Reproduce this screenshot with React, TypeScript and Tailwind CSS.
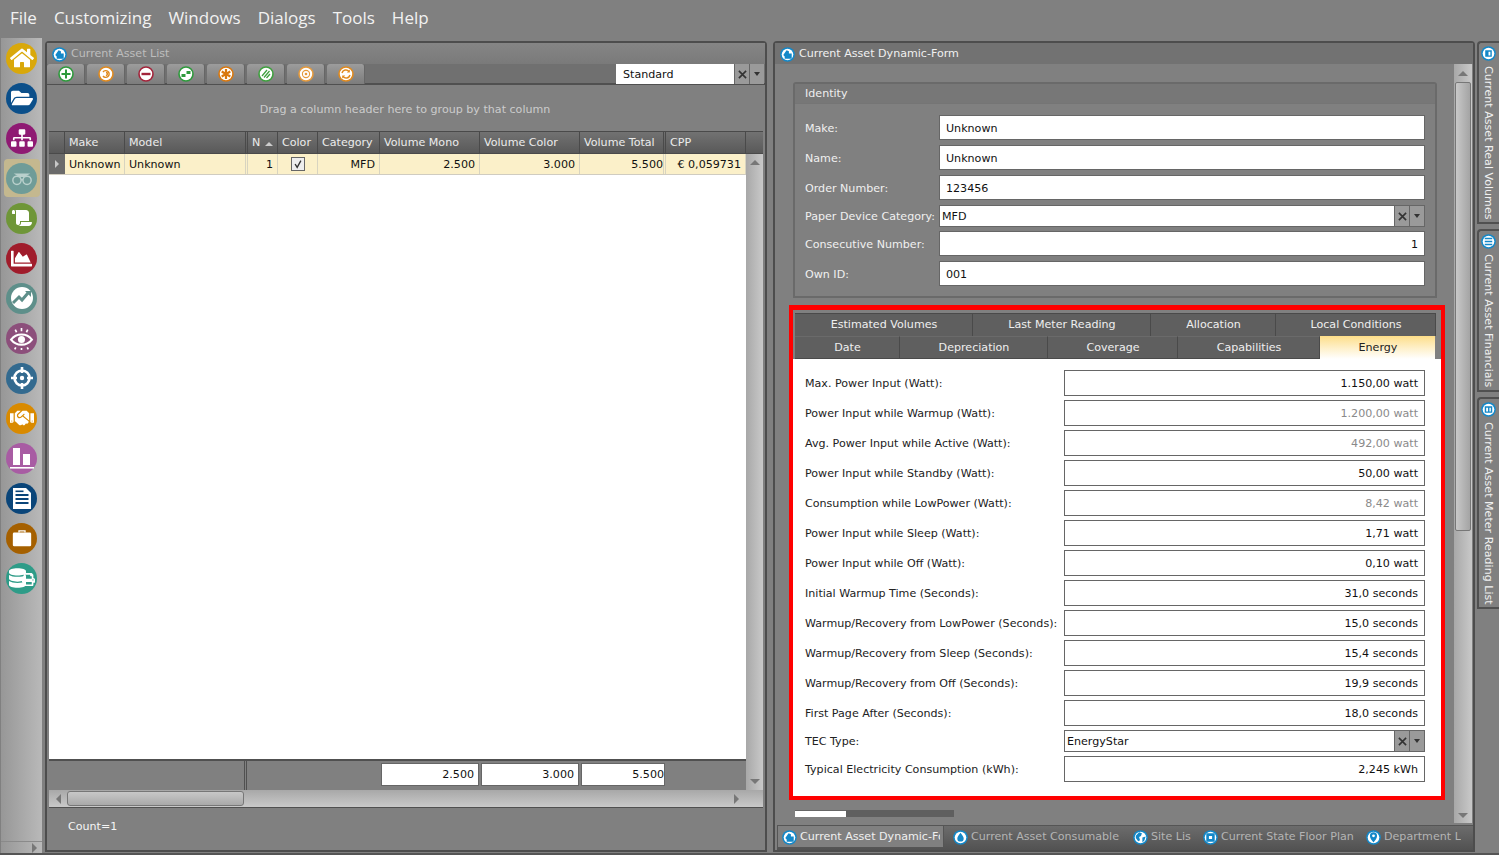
import React from 'react';
import {
  FaHome, FaFolderOpen, FaSitemap, FaScroll, FaChartArea, FaHandshake, FaDatabase, FaPrint,
} from 'react-icons/fa';

const menu = ['File', 'Customizing', 'Windows', 'Dialogs', 'Tools', 'Help'];

const Binoculars = () => (
  <svg viewBox="0 0 24 24" className="w-[22px] h-[22px]" fill="none" stroke="#b9d0cc" strokeWidth="1.6">
    <circle cx="6.5" cy="14.5" r="4.5" />
    <circle cx="17.5" cy="14.5" r="4.5" />
    <path d="M3 7h18l-6 4h-6z" fill="#b9d0cc" stroke="none" />
    <path d="M11 14h2" />
  </svg>
);
const Trend = () => (
  <svg viewBox="0 0 24 24" className="w-[24px] h-[24px]">
    <circle cx="12" cy="12" r="11" fill="#fff" />
    <path d="M3 17l6-6 3 3 6-7" fill="none" stroke="#5e8f8a" strokeWidth="3" />
    <path d="M15 5h6v6z" fill="#5e8f8a" />
  </svg>
);
const Target = () => (
  <svg viewBox="0 0 24 24" className="w-[24px] h-[24px]" fill="none" stroke="#fff">
    <circle cx="12" cy="12" r="7.5" strokeWidth="2.6" />
    <circle cx="12" cy="12" r="2.2" fill="#fff" strokeWidth="0" />
    <path d="M12 1v6M12 17v6M1 12h6M17 12h6" strokeWidth="2.6" />
  </svg>
);
const Eye = () => (
  <svg viewBox="0 0 24 24" className="w-[25px] h-[25px]" fill="none" stroke="#fff">
    <path d="M2 13c5-6.500 15-6.500 20 0-5 6.500-15 6.500-20 0z" strokeWidth="2" />
    <circle cx="12" cy="13" r="3.400" fill="#fff" strokeWidth="0" />
    <path d="M12 2v3M6 3.500l1.300 2.500M18 3.500l-1.300 2.500M12 21v2M6.500 20.500l-1 2M17.500 20.500l1 2" strokeWidth="1.600" />
  </svg>
);
const Bars = () => (
  <svg viewBox="0 0 24 24" className="w-[24px] h-[24px]" fill="#fff">
    <rect x="3" y="2" width="7" height="17" />
    <rect x="13" y="8" width="7" height="11" />
    <rect x="0" y="21" width="24" height="1.6" />
  </svg>
);
const TableDoc = () => (
  <svg viewBox="0 0 24 24" className="w-[24px] h-[24px]" fill="#fff">
    <path d="M3 2h13l5 5v16H3z" />
    <g fill="#0a4579">
      <rect x="5.5" y="8" width="13" height="2" />
      <rect x="5.5" y="12" width="13" height="2" />
      <rect x="5.5" y="16" width="13" height="2" />
      <rect x="5.5" y="4.5" width="8" height="1.6" />
    </g>
  </svg>
);
const Case = () => (
  <svg viewBox="0 0 24 24" className="w-[22px] h-[22px]" fill="#fff">
    <path d="M8 6V3.500h8V6h-1.400V5H9.400v1z" />
    <rect x="2" y="6" width="20" height="15" rx="1.500" />
  </svg>
);
const DbPrint = () => (
  <span className="relative block w-[26px] h-[22px]">
    <FaDatabase className="absolute left-0 top-[1px] text-white w-[17px] h-[20px]" />
    <FaPrint className="absolute right-0 top-[6px] text-white w-[13px] h-[13px]" />
  </span>
);

const sideIcons: { bg: string; icon: React.ReactNode; active?: boolean }[] = [
  { bg: 'bg-[#d9a80b]', icon: <FaHome className="text-white w-[24px] h-[24px]" /> },
  { bg: 'bg-[#0b4f8a]', icon: <FaFolderOpen className="text-white w-[22px] h-[22px]" /> },
  { bg: 'bg-[#8f1a73]', icon: <FaSitemap className="text-white w-[22px] h-[22px]" /> },
  { bg: 'bg-[#6f9c98]', icon: <Binoculars />, active: true },
  { bg: 'bg-[#6f9638]', icon: <FaScroll className="text-white w-[20px] h-[20px]" /> },
  { bg: 'bg-[#a01c2b]', icon: <FaChartArea className="text-white w-[21px] h-[21px]" /> },
  { bg: 'bg-[#5e8f8a]', icon: <Trend /> },
  { bg: 'bg-[#8c4f7b]', icon: <Eye /> },
  { bg: 'bg-[#336a8f]', icon: <Target /> },
  { bg: 'bg-[#d98a00]', icon: <FaHandshake className="text-white w-[24px] h-[24px]" /> },
  { bg: 'bg-[#a85ca3]', icon: <Bars /> },
  { bg: 'bg-[#0a4579]', icon: <TableDoc /> },
  { bg: 'bg-[#a56000]', icon: <Case /> },
  { bg: 'bg-[#2e9c88]', icon: <DbPrint /> },
];

// small toolbar glyphs, all share a white disc with a coloured ring
const ToolIcon = ({ color, children }: { color: string; children: React.ReactNode }) => (
  <svg viewBox="0 0 16 16" className="w-[16px] h-[16px]">
    <circle cx="8" cy="8" r="7" fill="#fff" stroke={color} strokeWidth="1.6" />
    <g stroke={color} fill={color}>{children}</g>
  </svg>
);

const toolbar: React.ReactNode[] = [
  <ToolIcon color="#2e9a3c"><path d="M8 3.5v9M3.5 8h9" strokeWidth="2" fill="none" /></ToolIcon>,
  <ToolIcon color="#e08a1e"><path d="M5 6a3.4 3.4 0 1 1 0 4M8 6.5a1.5 1.5 0 1 1-.1 3" strokeWidth="1.4" fill="none" /></ToolIcon>,
  <ToolIcon color="#a3243b"><path d="M3.5 8h9" strokeWidth="2.4" fill="none" /></ToolIcon>,
  <ToolIcon color="#2e9a3c"><path d="M3.5 8h4v3h-4zM8.5 5h4v3h-4z" strokeWidth="0" /></ToolIcon>,
  <ToolIcon color="#d9780f"><path d="M8 3v10M3.7 5.5l8.6 5M12.3 5.5l-8.6 5" strokeWidth="2.2" fill="none" /></ToolIcon>,
  <ToolIcon color="#3fa03f"><path d="M4 10l5-6M6 11.5l5.5-6.5M8.5 12l3.5-4" strokeWidth="1.3" fill="none" /></ToolIcon>,
  <ToolIcon color="#e59a3c"><circle cx="8" cy="8" r="3.6" fill="none" strokeWidth="1.1" /><circle cx="8" cy="8" r="1.3" strokeWidth="0" /></ToolIcon>,
  <ToolIcon color="#e08a1e"><path d="M4 7a4 4 0 0 1 7-1.5M12 9a4 4 0 0 1-7 1.5" strokeWidth="1.5" fill="none" /><path d="M11.8 3.5v3h-3zM4.2 12.5v-3h3z" strokeWidth="0" /></ToolIcon>,
];

const columns = [
  { label: 'Make', value: 'Unknown', w: 'w-[60px]', right: false },
  { label: 'Model', value: 'Unknown', w: 'w-[123px]', right: false, sep: true },
  { label: 'N', value: '1', w: 'w-[30px]', right: true, sort: true },
  { label: 'Color', value: '', w: 'w-[40px]', right: false, check: true },
  { label: 'Category', value: 'MFD', w: 'w-[62px]', right: true },
  { label: 'Volume Mono', value: '2.500', w: 'w-[100px]', right: true },
  { label: 'Volume Color', value: '3.000', w: 'w-[100px]', right: true },
  { label: 'Volume Total', value: '5.500', w: 'w-[86px]', right: true, clip: true, sep: true },
  { label: 'CPP', value: '€ 0,059731', w: 'w-[80px]', right: true },
];

const X = ({ size = 'w-[9px] h-[9px]' }: { size?: string }) => (
  <svg viewBox="0 0 10 10" className={size}><path d="M1 1l8 8M9 1l-8 8" stroke="#333" strokeWidth="1.8" /></svg>
);
const Caret = () => <span className="block w-0 h-0 border-x-[3.5px] border-x-transparent border-t-[4px] border-t-[#333]" />;

const ComboButtons = () => (
  <>
    <span className="w-[15px] self-stretch bg-[#9a9a9a] border-l border-[#666] flex items-center justify-center"><X /></span>
    <span className="w-[15px] self-stretch bg-[#9a9a9a] border-l border-[#666] flex items-center justify-center"><Caret /></span>
  </>
);

// round blue badge used on window titles and dock tabs
const Badge = ({ kind = 'asset' }: { kind?: 'asset' | 'drop' | 'globe' | 'dot' | 'pin' | 'vol' | 'fin' | 'meter' }) => (
  <svg viewBox="0 0 16 16" className="w-[15px] h-[15px] shrink-0">
    <circle cx="8" cy="8" r="7.8" fill="#1388c9" />
    <circle cx="8" cy="8" r="6.2" fill="#fff" />
    {kind === 'asset' && <path d="M3.500 8.500l3.500-5 2.500 1v2.500h3v5.500h-7.500v-2.500z" fill="#1388c9" />}
    {kind === 'drop' && <path d="M8 3c2 2.700 3.400 4.400 3.400 6a3.400 3.400 0 0 1-6.800 0c0-1.600 1.400-3.300 3.400-6z" fill="#1388c9" />}
    {kind === 'globe' && <path d="M3 6l3.500-3.500 3 1-1 3-2 1 1 3.500-2 1-2.500-3.500zM10 8l3.500-1-1.500 4.500-2 1.500z" fill="#1388c9" />}
    {kind === 'dot' && <path d="M3.500 3.500h9v9h-9zM6.300 6.300v3.400h3.400v-3.400z" fill="#1388c9" fillRule="evenodd" />}
    {kind === 'pin' && <path d="M8 2.500a3.800 3.800 0 0 1 3.800 3.800c0 2.300-2.300 5-3.800 7-1.500-2-3.800-4.700-3.800-7A3.800 3.800 0 0 1 8 2.500zm0 2.200a1.500 1.500 0 1 0 0 3 1.500 1.500 0 0 0 0-3z" fill="#1388c9" fillRule="evenodd" />}
    {kind === 'vol' && <path d="M4.500 4.500h7v7h-7zM8 6v4h2v-4z" fill="#1388c9" fillRule="evenodd" />}
    {kind === 'fin' && <path d="M4 4h8v1.500h-8zM4 7.200h8v1.500h-8zM4 10.500h8v1.500h-8z" fill="#1388c9" />}
    {kind === 'meter' && <path d="M4 4.500h8v7h-8zM5.500 6v4h2v-4zM9 6v4h1.500v-4z" fill="#1388c9" fillRule="evenodd" />}
  </svg>
);

const ScrollArrow = ({ dir }: { dir: 'up' | 'down' | 'left' | 'right' }) => {
  if (dir === 'up') return <span className="block w-0 h-0 border-x-[5px] border-x-transparent border-b-[5px] border-b-[#777]" />;
  if (dir === 'down') return <span className="block w-0 h-0 border-x-[5px] border-x-transparent border-t-[5px] border-t-[#777]" />;
  if (dir === 'left') return <span className="block w-0 h-0 border-y-[5px] border-y-transparent border-r-[5px] border-r-[#777]" />;
  return <span className="block w-0 h-0 border-y-[5px] border-y-transparent border-l-[5px] border-l-[#777]" />;
};

const identityRows = [
  { label: 'Make:', value: 'Unknown', cls: '' },
  { label: 'Name:', value: 'Unknown', cls: 'mt-[5px]' },
  { label: 'Order Number:', value: '123456', cls: 'mt-[5px]' },
  { label: 'Paper Device Category:', value: 'MFD', cls: 'mt-[5px]', combo: true },
  { label: 'Consecutive Number:', value: '1', cls: 'mt-[4px]', right: true },
  { label: 'Own ID:', value: '001', cls: 'mt-[5px]' },
];

const energyRows = [
  { label: 'Max. Power Input (Watt):', value: '1.150,00 watt' },
  { label: 'Power Input while Warmup (Watt):', value: '1.200,00 watt', muted: true },
  { label: 'Avg. Power Input while Active (Watt):', value: '492,00 watt', muted: true },
  { label: 'Power Input while Standby (Watt):', value: '50,00 watt' },
  { label: 'Consumption while LowPower (Watt):', value: '8,42 watt', muted: true },
  { label: 'Power Input while Sleep (Watt):', value: '1,71 watt' },
  { label: 'Power Input while Off (Watt):', value: '0,10 watt' },
  { label: 'Initial Warmup Time (Seconds):', value: '31,0 seconds' },
  { label: 'Warmup/Recovery from LowPower (Seconds):', value: '15,0 seconds' },
  { label: 'Warmup/Recovery from Sleep (Seconds):', value: '15,4 seconds' },
  { label: 'Warmup/Recovery from Off (Seconds):', value: '19,9 seconds' },
  { label: 'First Page After (Seconds):', value: '18,0 seconds' },
];

const tabsTop = [
  { label: 'Estimated Volumes', w: 'w-[178px]' },
  { label: 'Last Meter Reading', w: 'w-[178px]' },
  { label: 'Allocation', w: 'w-[125px]' },
  { label: 'Local Conditions', w: 'w-[160px]' },
];
const tabsBottom = [
  { label: 'Date', w: 'w-[105px]' },
  { label: 'Depreciation', w: 'w-[148px]' },
  { label: 'Coverage', w: 'w-[130px]' },
  { label: 'Capabilities', w: 'w-[142px]' },
];

const dockTabs = [
  { label: 'Current Asset Consumable', kind: 'drop' as const, w: 'w-[180px]' },
  { label: 'Site Lis', kind: 'globe' as const, w: 'w-[70px]' },
  { label: 'Current State Floor Plan', kind: 'dot' as const, w: 'w-[163px]' },
  { label: 'Department Li', kind: 'pin' as const, w: 'w-[104px]' },
];

const sideTabs = [
  { label: 'Current Asset Real Volumes', kind: 'vol' as const, h: 'h-[183px]' },
  { label: 'Current Asset Financials', kind: 'fin' as const, h: 'h-[163px]' },
  { label: 'Current Asset Meter Reading List', kind: 'meter' as const, h: 'h-[212px]' },
];

export default function App() {
  return (
    <div className="w-[1499px] h-[855px] overflow-hidden bg-[#808080] flex flex-col font-['DejaVu_Sans',sans-serif] text-[11.1px] border-b-2 border-[#555]">
      {/* Menu */}
      <div className="h-[38px] shrink-0 flex items-center pl-[10px] pb-[2px] gap-[17px] font-['Open_Sans',sans-serif] text-[17px] text-[#f2f2f2]">
        {menu.map(m => <span key={m}>{m}</span>)}
      </div>

      <div className="flex-1 flex min-h-0">
        {/* Icon rail */}
        <div className="w-[41px] ml-px mr-[3px] shrink-0 flex flex-col bg-gradient-to-r from-[#979797] to-[#b9b9b9]">
          <div className="flex-1 flex flex-col items-center pt-[1px]">
            {sideIcons.map((s, i) => (
              <div key={i} className={`w-[36px] h-[38px] mb-[2px] flex items-center justify-center rounded-sm ${s.active ? 'bg-[#c4b88f]' : ''}`}>
                <span className={`w-[31px] h-[31px] rounded-full flex items-center justify-center ${s.bg}`}>{s.icon}</span>
              </div>
            ))}
          </div>
          <div className="h-[12px] border-t border-[#8a8a8a] flex items-center justify-end pr-[5px]"><ScrollArrow dir="right" /></div>
        </div>

        {/* Current Asset List */}
        <div className="w-[722px] h-[811px] mt-[3px] shrink-0 border-2 border-[#4d4d4d] rounded-t-sm flex flex-col">
          <div className="h-[21px] shrink-0 flex items-center gap-[4px] pl-[5px] pt-[1px] text-[#bdbdbd] bg-gradient-to-b from-[#858585] to-[#7a7a7a]">
            <Badge />
            <span>Current Asset List</span>
          </div>
          <div className="h-[21px] shrink-0 flex bg-[#707070] border-b-2 border-[#505050]">
            <div className="flex-1 flex gap-[2px]">
              {toolbar.map((t, i) => (
                <span key={i} className="w-[38px] h-[20px] rounded-t-[3px] border-r border-[#666] bg-gradient-to-b from-[#9c9c9c] to-[#7c7c7c] flex items-center justify-center">{t}</span>
              ))}
            </div>
            <div className="w-[148px] h-[20px] flex items-stretch mr-[1px]">
              <span className="flex-1 bg-white text-[#111] pl-[7px] pr-[6px] pt-[3px] flex items-center">Standard</span>
              <ComboButtons />
            </div>
          </div>
          <div className="h-[46px] shrink-0 flex items-center justify-center text-[#cccccc] pr-[2px] pt-[5px]">Drag a column header here to group by that column</div>

          <div className="mx-[2px] w-[714px] flex-1 min-h-0 flex flex-col">
            {/* header */}
            <div className="h-[23px] shrink-0 flex text-[#ececec] bg-gradient-to-b from-[#727272] to-[#595959] border-y border-[#4a4a4a]">
              <span className="w-[16px] border-r border-[#4a4a4a]" />
              {columns.map(c => (
                <span key={c.label} className={`${c.w} shrink-0 pl-[4px] pt-[2px] flex items-center gap-[5px] overflow-hidden border-[#4a4a4a] ${c.sep ? 'border-r-[3px] border-double' : 'border-r'}`}>
                  {c.label}
                  {c.sort && <span className="w-0 h-0 border-x-[4px] border-x-transparent border-b-[4px] border-b-[#ccc]" />}
                </span>
              ))}
            </div>
            {/* row + blank grid + scrollbar */}
            <div className="flex-1 min-h-0 flex">
              <div className="w-[697px] shrink-0 flex flex-col">
                <div className="h-[21px] shrink-0 flex text-[#111] bg-[#fbf0c9] border-b border-[#d0ccc0]">
                  <span className="w-[16px] bg-[#6b6b6b] flex items-center justify-center">
                    <span className="w-0 h-0 border-y-[4px] border-y-transparent border-l-[4px] border-l-[#c8c8c8]" />
                  </span>
                  {columns.map(c => (
                    <span key={c.label} className={`${c.w} shrink-0 pt-[3px] border-[#d8d4c0] flex items-center overflow-hidden whitespace-nowrap ${c.sep ? 'border-r-[3px] border-double' : 'border-r'} ${c.right ? (c.clip ? 'justify-end' : 'justify-end pr-[4px]') : 'pl-[4px]'} ${c.check ? 'justify-center !pt-0' : ''}`}>
                      {c.check ? (
                        <span className="w-[14px] h-[14px] ml-[-4px] border border-[#666] bg-[#eeeeee] flex items-center justify-center">
                          <svg viewBox="0 0 12 12" className="w-[10px] h-[10px]"><path d="M2.500 6l2.500 4 4.500-8" fill="none" stroke="#333" strokeWidth="1.600" /></svg>
                        </span>
                      ) : c.value}
                    </span>
                  ))}
                </div>
                <div className="flex-1 bg-white" />
                <div className="h-[31px] shrink-0 border-t-2 border-[#505050] flex bg-[#808080] text-[#111]">
                  <span className="w-[198px] border-r-[3px] border-double border-[#505050]" />
                  <span className="w-[134px]" />
                  {['w-[98px]', 'w-[98px]', 'w-[84px]'].map((w, i) => (
                    <span key={i} className={`${w} h-[23px] mt-[2px] mr-[2px] pt-[1px] bg-white border border-[#666] flex items-center justify-end ${i === 2 ? 'pr-0' : 'pr-[4px]'}`}>{['2.500', '3.000', '5.500'][i]}</span>
                  ))}
                </div>
              </div>
              <div className="w-[17px] shrink-0 bg-gradient-to-r from-[#a8a8a8] to-[#c9c9c9] flex flex-col items-center justify-between py-[6px]">
                <ScrollArrow dir="up" />
                <ScrollArrow dir="down" />
              </div>
            </div>
            <div className="h-[18px] shrink-0 bg-gradient-to-b from-[#a8a8a8] to-[#c9c9c9] border-b border-[#505050] flex items-center">
              <span className="w-[18px] flex justify-center"><ScrollArrow dir="left" /></span>
              <span className="w-[177px] h-[15px] rounded-[3px] border border-[#777] bg-gradient-to-b from-[#c8c8c8] to-[#a9a9a9]" />
              <span className="flex-1 flex justify-end pr-[24px]"><ScrollArrow dir="right" /></span>
            </div>
          </div>
          <div className="h-[42px] shrink-0 flex items-center pl-[21px] pb-[4px] text-[#f5f5f5]">Count=1</div>
        </div>

        {/* Current Asset Dynamic-Form */}
        <div className="w-[702px] h-[811px] mt-[3px] ml-[6px] shrink-0 border-2 border-[#4d4d4d] rounded-t-sm flex flex-col">
          <div className="h-[21px] shrink-0 flex items-center gap-[4px] pl-[5px] pt-[1px] text-[#f0f0f0] bg-[#727272]">
            <Badge />
            <span>Current Asset Dynamic-Form</span>
          </div>
          <div className="flex-1 min-h-0 flex">
            <div className="w-[679px] shrink-0 flex flex-col pl-[14px]">
              {/* Identity */}
              <div className="w-[644px] h-[216px] mt-[18px] ml-[4px] shrink-0 border-2 border-[#6a6a6a] rounded-t-[3px] flex flex-col">
                <div className="h-[20px] shrink-0 border-b border-[#757575] pl-[10px] pt-[2px] flex items-center text-[#efefef] bg-[#777777]">Identity</div>
                <div className="pt-[11px] pr-[10px] flex flex-col">
                  {identityRows.map(r => (
                    <div key={r.label} className={`flex items-center ${r.cls} ${r.combo ? 'h-[22px]' : 'h-[25px]'}`}>
                      <span className="w-[144px] shrink-0 pl-[10px] pt-[3px] text-[#f0f0f0] whitespace-nowrap">{r.label}</span>
                      {r.combo ? (
                        <div className="flex-1 h-full bg-white border border-[#666] flex items-center text-[#111]">
                          <span className="flex-1 pl-[2px] pt-[3px]">{r.value}</span>
                          <ComboButtons />
                        </div>
                      ) : (
                        <div className={`flex-1 h-full bg-white border border-[#666] flex items-center text-[#111] px-[6px] pt-[3px] ${r.right ? 'justify-end' : ''}`}>{r.value}</div>
                      )}
                    </div>
                  ))}
                </div>
              </div>

              {/* Energy tabs, highlighted */}
              <div className="w-[656px] h-[495px] mt-[7px] shrink-0 border-t-[5px] border-l-4 border-r-4 border-b-4 border-[#ff0000] flex flex-col text-[#222]">
                <div className="h-[49px] shrink-0 pt-[3px] pl-[2px] flex flex-col text-[#efefef]">
                  <div className="h-[23px] flex">
                    {tabsTop.map(t => (
                      <span key={t.label} className={`${t.w} shrink-0 bg-[#5f5f5f] border-r border-[#4a4a4a] border-t border-t-[#4a4a4a] flex items-center justify-center pl-[1px]`}>{t.label}</span>
                    ))}
                  </div>
                  <div className="h-[23px] flex">
                    {tabsBottom.map(t => (
                      <span key={t.label} className={`${t.w} shrink-0 pt-[2px] pl-[1px] bg-[#5f5f5f] border-r border-[#4a4a4a] border-t border-t-[#6a6a6a] border-b border-b-[#4a4a4a] flex items-center justify-center`}>{t.label}</span>
                    ))}
                    <span className="w-[115px] shrink-0 pt-[2px] pl-[1px] bg-gradient-to-b from-[#fdde88] to-white text-[#222] flex items-center justify-center">Energy</span>
                  </div>
                </div>
                <div className="flex-1 bg-white pt-[11px] pl-[12px] pr-[16px] flex flex-col gap-[4px]">
                  {energyRows.map(r => (
                    <div key={r.label} className="h-[26px] flex items-center">
                      <span className="w-[259px] shrink-0 pt-[3px] whitespace-nowrap">{r.label}</span>
                      <div className={`flex-1 h-full border border-[#666] flex items-center justify-end px-[6px] pt-[3px] ${r.muted ? 'text-[#8a8a8a]' : 'text-[#111]'}`}>{r.value}</div>
                    </div>
                  ))}
                  <div className="h-[22px] flex items-center">
                    <span className="w-[259px] shrink-0 pt-[3px]">TEC Type:</span>
                    <div className="flex-1 h-full border border-[#666] flex items-center text-[#111]">
                      <span className="flex-1 pl-[2px] pt-[3px]">EnergyStar</span>
                      <ComboButtons />
                    </div>
                  </div>
                  <div className="h-[26px] flex items-center">
                    <span className="w-[259px] shrink-0 pt-[3px]">Typical Electricity Consumption (kWh):</span>
                    <div className="flex-1 h-full border border-[#666] flex items-center justify-end px-[6px] pt-[3px] text-[#111]">2,245 kWh</div>
                  </div>
                </div>
              </div>

              <div className="w-[159px] h-[7px] mt-[10px] ml-[6px] bg-[#5f5f5f] flex shrink-0">
                <span className="w-[51px] bg-white border-t border-[#666]" />
              </div>
            </div>

            <div className="w-[18px] shrink-0 bg-gradient-to-r from-[#a8a8a8] to-[#c9c9c9] flex flex-col items-center">
              <span className="h-[18px] flex items-center"><ScrollArrow dir="up" /></span>
              <span className="w-[16px] h-[449px] rounded-[2px] border border-[#777] bg-gradient-to-r from-[#c8c8c8] to-[#a4a4a4]" />
              <span className="flex-1" />
              <span className="h-[16px] flex items-center"><ScrollArrow dir="down" /></span>
            </div>
          </div>

          {/* dock tabs */}
          <div className="h-[25px] mt-[2px] shrink-0 ml-[2px] flex bg-gradient-to-b from-[#6c6c6c] to-[#525252] text-[#b4b4b4] border-t border-[#555]">
            <span className="w-[167px] h-[22px] shrink-0 pt-[1px] bg-[#808080] border-x border-b border-[#555] flex items-center gap-[3px] pl-[4px] pr-[3px] text-[#f0f0f0] overflow-hidden whitespace-nowrap">
              <Badge />
              <span className="overflow-hidden">Current Asset Dynamic-Form</span>
            </span>
            {dockTabs.map(t => (
              <span key={t.label} className={`${t.w} shrink-0 h-[22px] pt-[1px] flex items-center gap-[3px] pl-[9px] overflow-hidden whitespace-nowrap`}>
                <Badge kind={t.kind} />
                <span>{t.label}</span>
              </span>
            ))}
          </div>
        </div>

        {/* Side dock */}
        <div className="ml-[2px] mt-[3px] flex flex-col gap-[5px] text-[#f0f0f0]">
          {sideTabs.map(t => (
            <div key={t.label} className={`w-[22px] ${t.h} shrink-0 border-l-2 border-y-2 border-[#505050] rounded-tl-sm flex flex-col items-center pt-[3px] pr-[2px] gap-[5px] overflow-hidden`}>
              <Badge kind={t.kind} />
              <span className="[writing-mode:vertical-rl] whitespace-nowrap">{t.label}</span>
            </div>
          ))}
        </div>
      </div>
    </div>
  );
}
